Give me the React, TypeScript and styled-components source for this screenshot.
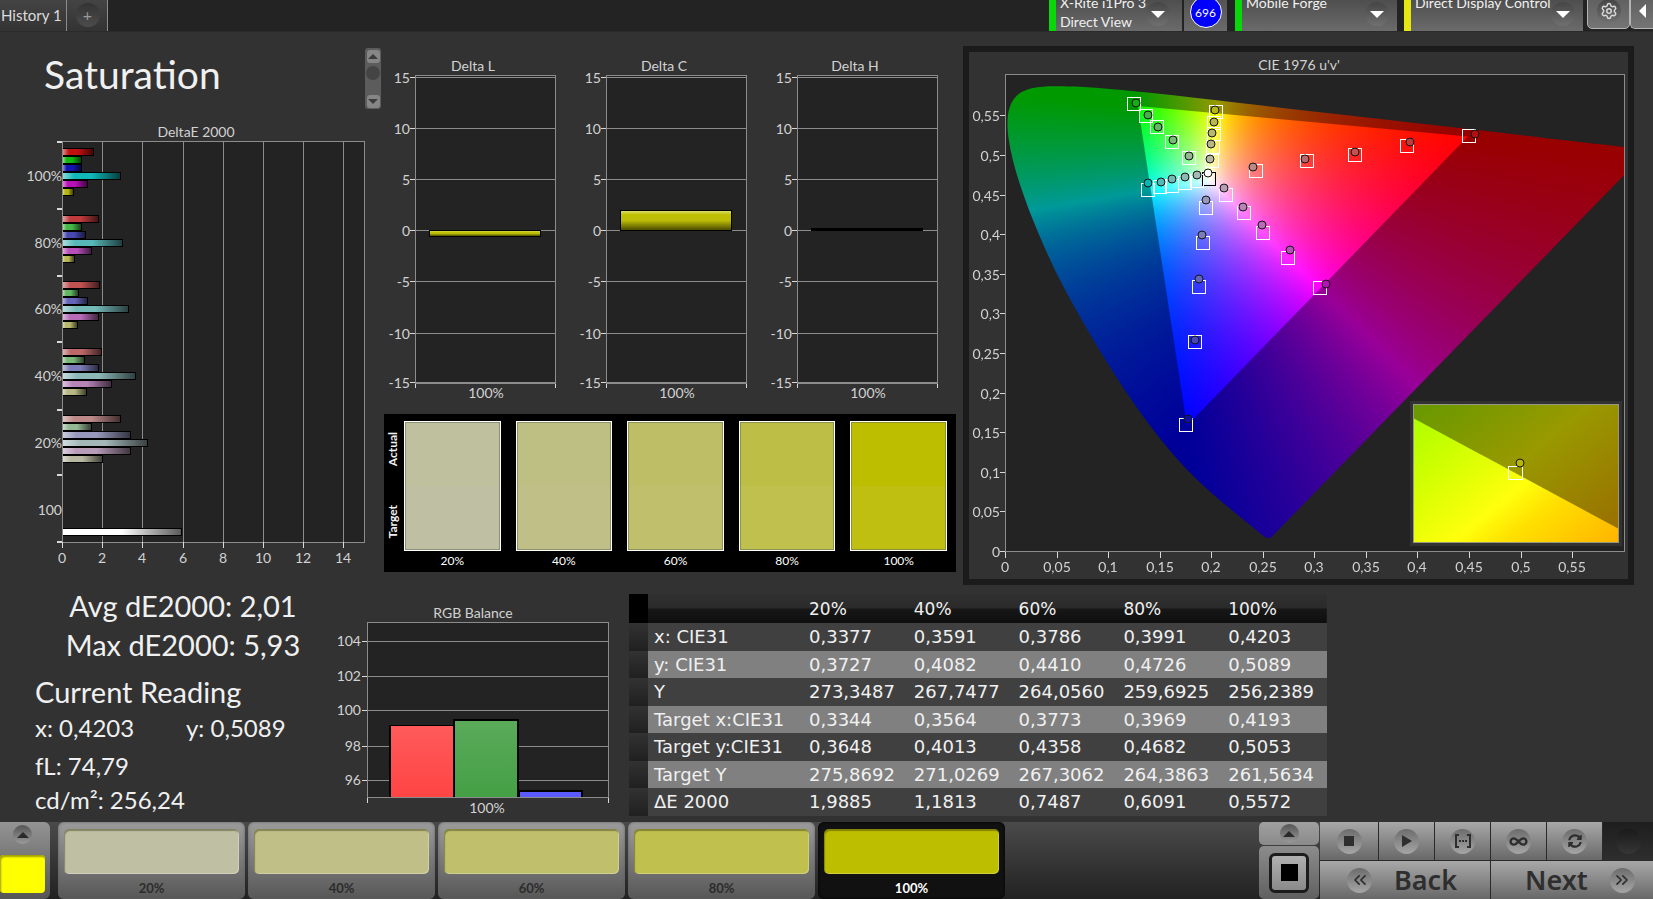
import React, { useEffect, useRef } from "react";
import styled, { createGlobalStyle } from "styled-components";
import { Settings, ChevronsLeft, ChevronsRight, Infinity as InfinityIcon } from "lucide-react";
import { FaSyncAlt } from "react-icons/fa";

const GlobalStyle = createGlobalStyle`
  * { box-sizing: border-box; }
  body { margin: 0; background: #323232; color: #f0f0f0; font-family: Lato, "Liberation Sans", sans-serif; }
  button { font: inherit; color: inherit; border: 0; padding: 0; margin: 0; background: none; cursor: pointer; }
`;

const Page = styled.div`
  display: flex;
  flex-direction: column;
  min-height: 100vh;
  overflow: hidden;
`;

/* ---------- top bar ---------- */

const TopBar = styled.header`
  display: flex;
  align-items: flex-end;
  height: 32px;
  background: #232323;
  border-bottom: 1px solid #2b2b2b;
  overflow: hidden;
`;

const HistoryTab = styled.button<{ $width: number }>`
  display: flex;
  align-items: center;
  justify-content: flex-start;
  width: ${(p) => p.$width}px;
  height: 31px;
  padding: 0 0 2px 1px;
  font-size: 15px;
  color: #dcdcdc;
  background: linear-gradient(#444, #333);
  border-right: 1px solid #8c8c8c;
  white-space: nowrap;
`;

const AddTab = styled(HistoryTab)`
  justify-content: center;
`;

const Spacer = styled.div`
  flex: 1;
`;

const AddMark = styled.span`
  display: grid;
  place-items: center;
  width: 24px;
  height: 24px;
  border-radius: 50%;
  background: linear-gradient(#333, #4c4c4c);
  color: #9a9a9a;
  font-size: 16px;
  line-height: 24px;
`;

const Device = styled.button<{ $accent: string; $width: number; $end?: number }>`
  flex: none;
  display: flex;
  align-items: flex-start;
  justify-content: space-between;
  width: ${(p) => p.$width}px;
  height: 42px;
  padding: 4px ${(p) => p.$end ?? 8}px 0 4px;
  border-left: 7px solid ${(p) => p.$accent};
  background: linear-gradient(#444, #6b6b6b);
  font-size: 14px;
  line-height: 19px;
  text-align: left;
  white-space: nowrap;
`;

const RoundMark = styled.span`
  display: grid;
  place-items: center;
  width: 24px;
  height: 24px;
  border-radius: 50%;
  background: linear-gradient(#454545, #707070);
  ${Device} > & { margin-top: 9px; }
`;

const Gap = styled.div<{ $width: number }>`
  flex: none;
  width: ${(p) => p.$width}px;
`;

const Counter = styled.div`
  flex: none;
  display: flex;
  align-items: flex-start;
  justify-content: center;
  width: 43px;
  height: 35px;
  margin: 0 8px 0 2px;
  background: linear-gradient(#505050, #6b6b6b);
`;

const CounterValue = styled.span`
  display: grid;
  place-items: center;
  width: 32px;
  height: 32px;
  border: 1px solid #fff;
  border-radius: 50%;
  background: #0000fb;
  font-size: 12px;
  color: #fff;
`;

const ToolButton = styled.button<{ $width: number }>`
  flex: none;
  display: grid;
  place-items: center;
  width: ${(p) => p.$width}px;
  height: 40px;
  margin-bottom: 2px;
  padding-top: 4px;
  border: 1px solid #b4b4b4;
  border-radius: 5px;
  background: linear-gradient(#5a5a5a, #757575);
  color: #d8d8d8;
`;

const EdgeButton = styled(ToolButton)`
  border-right: 0;
  border-radius: 5px 0 0 5px;
`;

/* ---------- measurement area ---------- */

const Charts = styled.main`
  display: grid;
  grid-template-columns: 383fr 575fr 695fr;
  min-height: 558px;
`;

const Column = styled.section`
  min-width: 0;
`;

const TitleRow = styled.div`
  display: flex;
  justify-content: space-between;
  align-items: flex-start;
  padding: 16px 2px 0 44px;
`;

const Title = styled.h1`
  margin: 0;
  font-size: 39px;
  line-height: 52px;
  font-weight: 400;
`;

const Scroller = styled.div`
  display: flex;
  flex-direction: column;
  align-items: center;
  justify-content: space-between;
  width: 16px;
  height: 61px;
  padding: 2px 1px 1px;
  border-radius: 3px;
  background: #5c5c5c;
`;

const ScrollButton = styled.button`
  display: grid;
  place-items: center;
  width: 13px;
  height: 13px;
  border-radius: 3px;
  background: #868686;
`;

const ScrollThumb = styled.span`
  width: 14px;
  height: 14px;
  margin-bottom: 12px;
  border-radius: 50%;
  background: #444;
`;

const Drawing = styled.svg`
  display: block;
  width: 100%;
  height: auto;
  font-family: Lato, "Liberation Sans", sans-serif;
  font-size: 14px;
  fill: #d2d2d2;
`;

const DeltaRow = styled.div`
  display: grid;
  grid-template-columns: repeat(3, 1fr);
  padding: 20px 1px 0;
`;

const SwatchPanel = styled.div`
  display: flex;
  margin: 0 2px 0 1px;
  padding: 7px 9px 0 0;
  height: 158px;
  background: #000;
`;

const SideLabels = styled.div`
  flex: none;
  display: flex;
  flex-direction: column;
  justify-content: space-between;
  align-items: center;
  width: 20px;
  height: 128px;
  padding: 11px 3px 11px 0;
  & > span {
    writing-mode: vertical-rl;
    transform: rotate(180deg);
    font-size: 12px;
    line-height: 12px;
    font-weight: 700;
  }
`;

const SwatchGrid = styled.div`
  flex: 1;
  display: grid;
  grid-template-columns: repeat(5, 1fr);
  column-gap: 15px;
`;

const Swatch = styled.figure<{ $actual: string; $target: string }>`
  margin: 0;
  font-size: 12px;
  line-height: 19px;
  text-align: center;
  color: #fff;
  &::before {
    content: "";
    display: block;
    height: 128px;
    border: 1px solid #fff;
    background: linear-gradient(${(p) => p.$actual} 50%, ${(p) => p.$target} 50%);
    box-shadow: inset 0 0 0 1px rgba(90, 100, 80, 0.5);
  }
`;

const CiePanel = styled.div`
  margin: 14px 19px 0 5px;
  border: 6px solid #1b1b1b;
`;

const Results = styled.section`
  display: grid;
  grid-template-columns: minmax(0, 330fr) minmax(0, 299fr) minmax(0, 698fr) minmax(0, 326fr);
  align-items: start;
  min-height: 232px;
`;

const Readings = styled.div`
  padding: 0 0 0 35px;
  white-space: nowrap;
`;

const Summary = styled.p`
  margin: 0;
  width: 296px;
  font-size: 29px;
  line-height: 39px;
  text-align: center;
  &:first-child { margin-top: -4px; }
`;

const ReadingTitle = styled.h2`
  margin: 0;
  padding-top: 9px;
  font-size: 29px;
  line-height: 38px;
  font-weight: 400;
`;

const ReadingLine = styled.p<{ $height: number }>`
  display: grid;
  grid-template-columns: 151px 1fr;
  margin: 0;
  font-size: 24px;
  line-height: ${(p) => p.$height}px;
`;

const DataTable = styled.table`
  width: 100%;
  margin-top: 4px;
  border-collapse: collapse;
  table-layout: fixed;
  font-family: "DejaVu Sans", "Noto Sans", sans-serif;
  font-size: 18px;
  line-height: 20px;
  text-align: left;
  white-space: nowrap;
  th, td { padding: 0 0 0 6px; font-weight: 400; overflow: visible; }
  thead tr { height: 29px; background: linear-gradient(#303030, #2a2a2a 48%, #171717 52%, #0e0e0e); }
  thead th { font-size: 17px; }
  thead th:first-child { background: #000; }
  tbody tr { height: 28px; background: #404040; }
  tbody tr:nth-child(even) { height: 27px; background: #808080; }
  tbody td:first-child { background: linear-gradient(#323232, #202020); }
`;

const Strip = styled.col`
  width: 19px;
`;
const NameCol = styled.col`
  width: 155px;
`;

/* ---------- bottom bar ---------- */

const BottomBar = styled.footer`
  display: flex;
  align-items: stretch;
  height: 77px;
  background: linear-gradient(#4a4a4a, #222);
  overflow: hidden;
`;

const CurrentPatch = styled.div`
  flex: none;
  display: flex;
  flex-direction: column;
  justify-content: space-between;
  width: 50px;
  margin-right: 8px;
  padding: 3px 5px 6px 0;
  border-radius: 0 6px 6px 0;
  background: linear-gradient(#949494, #555);
`;

const ArrowButton = styled.button`
  display: grid;
  place-items: center;
  width: 19px;
  height: 19px;
  margin: 0 0 0 13px;
  border-radius: 50%;
  background: linear-gradient(#555, #9a9a9a);
`;

const PatchColour = styled.span`
  height: 38px;
  border-radius: 4px;
  background: #ffff00;
  box-shadow: inset 1px 2px 2px #a0a000;
`;

const LevelButton = styled.button<{ $on?: boolean }>`
  flex: 0 1 187px;
  height: 77px;
  margin-right: 3px;
  padding: 7px 6px 0;
  border-radius: 6px;
  background: ${(p) => (p.$on ? "#111" : "linear-gradient(#9c9c9c, #575757)")};
  box-shadow: inset 0 0 3px ${(p) => (p.$on ? "#000" : "#606060")};
  font-size: 13px;
  line-height: 28px;
  font-weight: 700;
  color: ${(p) => (p.$on ? "#fff" : "#2c2c2c")};
`;

const LevelColour = styled.span<{ $colour: string }>`
  display: block;
  height: 45px;
  border-radius: 5px;
  background: ${(p) => p.$colour};
  box-shadow: inset 1px 2px 1px rgba(60, 60, 20, 0.45), inset -1px -1px 0 rgba(255, 255, 255, 0.25);
`;

const PatternStack = styled.div`
  flex: none;
  display: grid;
  grid-template-rows: 23px 1fr;
  row-gap: 1px;
  width: 61px;
  padding-right: 1px;
  & > div { display: grid; place-items: center; border-radius: 5px; background: linear-gradient(#8c8c8c, #606060); }
  & > div:first-child { background: linear-gradient(#a0a0a0, #8a8a8a); padding-right: 13px; }
`;

const PatternButton = styled.button`
  display: grid;
  place-items: center;
  width: 40px;
  height: 40px;
  border: 3px solid #1c1c1c;
  border-radius: 6px;
  background: linear-gradient(#b0b0b0, #8a8a8a);
  & > span { width: 17px; height: 17px; background: #000; }
`;

const Transport = styled.div`
  flex: none;
  display: grid;
  grid-template-columns: 58px 55px 55px 55px 55px 50px;
  grid-template-rows: 38px 38px;
  gap: 1px;
  background: #2a2a2a;
`;

const TransportButton = styled.button<{ $off?: boolean }>`
  display: grid;
  place-items: center;
  background: ${(p) => (p.$off ? "linear-gradient(#1e1e1e, #2e2e2e)" : "linear-gradient(#a8a8a8, #686868)")};
  color: #2e2e2e;
`;

const Knob = styled.span<{ $off?: boolean }>`
  display: grid;
  place-items: center;
  width: 25px;
  height: 25px;
  border-radius: 50%;
  background: ${(p) => (p.$off ? "linear-gradient(#1a1a1a, #363636)" : "linear-gradient(#6c6c6c, #a6a6a6)")};
`;

const StepButton = styled.button<{ $inset: number }>`
  grid-column: span 3;
  display: flex;
  align-items: center;
  gap: 22px;
  padding-left: ${(p) => p.$inset}px;
  background: linear-gradient(#a8a8a8, #686868);
  color: #2e2e2e;
  font-family: "Noto Sans", sans-serif;
  font-size: 27px;
  line-height: 36px;
  font-weight: 600;
`;

const FRAME = "#8c8c8c";
const TICK = "#d8d8d8";

function Triangle({ dir, size, fill }: { dir: "up" | "down" | "left"; size: number; fill: string }) {
  const d = dir === "up" ? "M0 8 L8 0 L16 8Z" : dir === "down" ? "M0 0 L16 0 L8 8Z" : "M8 0 L8 16 L0 8Z";
  const side = dir === "left";
  return (
    <svg width={side ? size / 2 : size} height={side ? size : size / 2} viewBox={side ? "0 0 8 16" : "0 0 16 8"} aria-hidden="true">
      <path d={d} fill={fill} />
    </svg>
  );
}

/* ---------- Delta E 2000 bars ---------- */

const BAR_GROUPS = [
  { label: "100%", y: 38, bars: [[32, "#c01010"], [20, "#12b812"], [20, "#1414b4"], [59, "#10b8b8"], [26, "#b810b8"], [12, "#b8b814"]] },
  { label: "80%", y: 105, bars: [[37, "#c03c3c"], [20, "#46b846"], [24, "#4848b0"], [61, "#58b8b8"], [30, "#b850b8"], [13, "#b8b850"]] },
  { label: "60%", y: 171, bars: [[38, "#c05252"], [17, "#62b862"], [26, "#6464b8"], [67, "#74b8b8"], [37, "#b86cb8"], [16, "#b8b86c"]] },
  { label: "40%", y: 238, bars: [[40, "#bc6868"], [23, "#7ab87a"], [37, "#7c7cb8"], [74, "#8cb8b8"], [50, "#b884b8"], [25, "#b8b884"]] },
  { label: "20%", y: 305, bars: [[59, "#bc8888"], [30, "#94b894"], [69, "#9898bc"], [86, "#a4b8b8"], [69, "#b89cb8"], [41, "#b8b8a0"]] },
] as { label: string; y: number; bars: [number, string][] }[];

function DeltaEChart() {
  const left = 62, right = 364, top = 32, bottom = 433;
  const xs = [0, 2, 4, 6, 8, 10, 12, 14];
  const px = (v: number) => left + Math.round(v * 20.1);
  return (
    <Drawing viewBox="0 0 383 460" role="img" aria-label="DeltaE 2000">
      <defs>
        <linearGradient id="sheen-x">
          <stop offset="0" stopColor="#fff" stopOpacity=".5" />
          <stop offset=".2" stopColor="#fff" stopOpacity="0" />
          <stop offset=".5" stopColor="#000" stopOpacity="0" />
          <stop offset="1" stopColor="#000" stopOpacity=".65" />
        </linearGradient>
      </defs>
      <text x="196" y="28" textAnchor="middle">DeltaE 2000</text>
      <g shapeRendering="crispEdges">
        <rect x={left} y={top} width={right - left} height={bottom - top} fill="#232323" />
        {xs.slice(1).map((v) => <rect key={v} x={px(v)} y={top} width="1" height={bottom - top} fill={FRAME} />)}
        <rect x={left + 0.5} y={top + 0.5} width={right - left} height={bottom - top} fill="none" stroke={FRAME} />
        {xs.map((v) => <rect key={v} x={px(v)} y={bottom} width="1" height="6" fill={TICK} />)}
        {[32, 99, 166, 232, 300, 365, 432].map((y) => <rect key={y} x="57" y={y} width="5" height="2" fill={TICK} />)}
      </g>
      {BAR_GROUPS.map((g) => (
        <g key={g.label}>
          {g.bars.map(([w, c], i) => (
            <g key={i}>
              <rect x={left + 1} y={g.y + i * 8 + 1} width={w - 1} height="8" fill="#000" />
              <rect x={left + 1} y={g.y + i * 8 + 2} width={w - 2} height="6" fill={c} />
              <rect x={left + 1} y={g.y + i * 8 + 2} width={w - 2} height="6" fill="url(#sheen-x)" />
            </g>
          ))}
          <text x={left} y={g.y + 34} textAnchor="end">{g.label}</text>
        </g>
      ))}
      <rect x={left + 1} y="419" width="119" height="8" fill="#000" />
      <rect x={left + 1} y="420" width="118" height="6" fill="#fff" />
      <rect x={left + 1} y="420" width="118" height="6" fill="url(#sheen-x)" />
      <text x={left} y="406" textAnchor="end">100</text>
      {xs.map((v) => <text key={v} x={px(v)} y="454" textAnchor="middle">{v}</text>)}
    </Drawing>
  );
}

/* ---------- Delta L / C / H ---------- */

function DeltaChart({ name, from, to }: { name: string; from: number; to: number }) {
  const id = "sheen-" + name;
  const grid: [number, number][] = [[15, 25], [10, 76], [5, 127], [0, 178], [-5, 229], [-10, 281], [-15, 330]];
  return (
    <Drawing viewBox="0 0 191 362" role="img" aria-label={"Delta " + name}>
      <defs>
        <linearGradient id={id} x1="0" y1="0" x2="0" y2="1">
          <stop offset="0" stopColor="#dcdc70" />
          <stop offset=".2" stopColor="#c0c000" />
          <stop offset=".5" stopColor="#bcbc08" />
          <stop offset="1" stopColor="#4c4c00" />
        </linearGradient>
      </defs>
      <text x="89" y="19" textAnchor="middle">{"Delta " + name}</text>
      <g shapeRendering="crispEdges">
        <rect x="31" y="23" width="140" height="308" fill="#232323" />
        {grid.map(([v, y]) => (
          <g key={v}>
            <rect x="31" y={y} width="140" height="1" fill={FRAME} />
            <rect x="26" y={y} width="5" height="1" fill={TICK} />
          </g>
        ))}
        <rect x="31.5" y="23.5" width="140" height="308" fill="none" stroke={FRAME} />
        <rect x="31" y="332" width="1" height="4" fill={TICK} />
        <rect x="171" y="332" width="1" height="4" fill={TICK} />
        <rect x="45" y={from} width="112" height={to - from} fill="#000" />
        {to - from > 4 && <rect x="46" y={from + 1} width="110" height={to - from - 2} fill={`url(#${id})`} />}
      </g>
      {grid.map(([v, y]) => <text key={v} x="26" y={y + 6} textAnchor="end">{v}</text>)}
      <text x="102" y="346" textAnchor="middle">100%</text>
    </Drawing>
  );
}

/* ---------- RGB balance ---------- */

function RgbBalance() {
  const grid: [number, number][] = [[104, 51], [102, 86], [100, 120], [98, 156], [96, 190]];
  return (
    <Drawing viewBox="0 0 299 230" role="img" aria-label="RGB Balance">
      <defs>
        <linearGradient id="rb" x1="0" y1="0" x2="0" y2="1"><stop stopColor="#ff5a5a" /><stop offset="1" stopColor="#ff4444" /></linearGradient>
        <linearGradient id="gb" x1="0" y1="0" x2="0" y2="1"><stop stopColor="#5aaa5a" /><stop offset="1" stopColor="#44a044" /></linearGradient>
      </defs>
      <text x="143" y="28" textAnchor="middle">RGB Balance</text>
      <g shapeRendering="crispEdges">
        <rect x="37" y="32" width="241" height="176" fill="#232323" />
        {grid.map(([v, y]) => (
          <g key={v}>
            <rect x="37" y={y} width="241" height="1" fill={FRAME} />
            <rect x="32" y={y} width="5" height="1" fill={TICK} />
          </g>
        ))}
        <rect x="59" y="135" width="65" height="73" fill="#000" />
        <rect x="61" y="136" width="62" height="72" fill="url(#rb)" />
        <rect x="123" y="129" width="66" height="79" fill="#000" />
        <rect x="125" y="131" width="62" height="77" fill="url(#gb)" />
        <rect x="188" y="200" width="65" height="8" fill="#000" />
        <rect x="190" y="202" width="61" height="6" fill="#5a5aff" />
        <rect x="37.5" y="32.5" width="241" height="175" fill="none" stroke={FRAME} />
        <rect x="37" y="208" width="1" height="5" fill={TICK} />
        <rect x="278" y="208" width="1" height="5" fill={TICK} />
      </g>
      {grid.map(([v, y]) => <text key={v} x="31" y={y + 5} textAnchor="end">{v}</text>)}
      <text x="157" y="223" textAnchor="middle">100%</text>
    </Drawing>
  );
}

/* ---------- CIE 1976 diagram ---------- */

const LOCUS_XY: [number, number][] = [
  [0.1741, 0.005], [0.1714, 0.0051], [0.1689, 0.0069], [0.1644, 0.0109], [0.1566, 0.0177], [0.151, 0.0227],
  [0.144, 0.0297], [0.1355, 0.0399], [0.1241, 0.0578], [0.1096, 0.0868], [0.0913, 0.1327], [0.0687, 0.2007],
  [0.0454, 0.295], [0.0235, 0.4127], [0.0082, 0.5384], [0.0039, 0.6548], [0.0139, 0.7502], [0.0389, 0.812],
  [0.0743, 0.8338], [0.1142, 0.8262], [0.1547, 0.8059], [0.2296, 0.7543], [0.3016, 0.6923], [0.3731, 0.6245],
  [0.4441, 0.5547], [0.5125, 0.4866], [0.5752, 0.4242], [0.627, 0.3725], [0.6658, 0.334], [0.6915, 0.3083],
  [0.719, 0.2809], [0.7347, 0.2653],
];
const GAMUT: [number, number][] = [[0.448, 0.5235], [0.128, 0.562], [0.1754, 0.158]];
const PLOT_W = 618;
const PLOT_H = 476;
const U_SCALE = 1031;
const V_SCALE = 792;

/* fully saturated display colour for a u'v' chromaticity */
function colourAt(u: number, v: number): [number, number, number] {
  const d = 6 * u - 16 * v + 12;
  const x = (9 * u) / d;
  const y = (4 * v) / d;
  const z = 1 - x - y;
  const lin = [
    3.2406 * x - 1.5372 * y - 0.4986 * z,
    -0.9689 * x + 1.8758 * y + 0.0415 * z,
    0.0557 * x - 0.204 * y + 1.057 * z,
  ].map((c) => Math.max(0, c));
  const m = Math.max(...lin, 1e-6);
  return lin.map((c) => (255 * c) / m) as [number, number, number];
}

function layer(strength: number) {
  const c = document.createElement("canvas");
  c.width = PLOT_W;
  c.height = PLOT_H;
  const ctx = c.getContext("2d")!;
  const img = ctx.createImageData(PLOT_W, PLOT_H);
  for (let j = 0; j < PLOT_H; j++) {
    for (let i = 0; i < PLOT_W; i++) {
      const rgb = colourAt(i / U_SCALE, (PLOT_H - j) / V_SCALE);
      const k = (j * PLOT_W + i) * 4;
      for (let n = 0; n < 3; n++) img.data[k + n] = rgb[n] * strength;
      img.data[k + 3] = 255;
    }
  }
  ctx.putImageData(img, 0, 0);
  return c;
}

function Chromaticity() {
  const ref = useRef<HTMLCanvasElement>(null);
  useEffect(() => {
    const ctx = ref.current!.getContext("2d")!;
    const toPx = ([u, v]: [number, number]): [number, number] => [u * U_SCALE, PLOT_H - v * V_SCALE];
    const locus = LOCUS_XY.map(([x, y]) => {
      const d = -2 * x + 12 * y + 3;
      return toPx([(4 * x) / d, (9 * y) / d]);
    });
    ctx.clearRect(0, 0, PLOT_W, PLOT_H);
    ctx.save();
    ctx.beginPath();
    ctx.moveTo(...locus[0]);
    for (let i = 0; i < locus.length - 1; i++) {
      const a = locus[Math.max(0, i - 1)], b = locus[i], c = locus[i + 1], e = locus[Math.min(locus.length - 1, i + 2)];
      ctx.bezierCurveTo(b[0] + (c[0] - a[0]) / 6, b[1] + (c[1] - a[1]) / 6, c[0] - (e[0] - b[0]) / 6, c[1] - (e[1] - b[1]) / 6, c[0], c[1]);
    }
    ctx.closePath();
    ctx.clip();
    ctx.drawImage(layer(0.6), 0, 0);
    ctx.restore();
    ctx.save();
    ctx.beginPath();
    GAMUT.map(toPx).forEach(([x, y], i) => (i ? ctx.lineTo(x, y) : ctx.moveTo(x, y)));
    ctx.closePath();
    ctx.clip();
    ctx.drawImage(layer(1), 0, 0);
    ctx.restore();
  }, []);
  return <canvas ref={ref} width={PLOT_W} height={PLOT_H} />;
}

/* target x, target y, reading x, reading y, reading colour */
const MARKS: [number, number, number, number, string][] = [
  [228, 129, 228, 123, "#a4b8b8"], [216, 131, 216, 125, "#8cb8b8"], [203, 134, 203, 127, "#74b8b8"], [191, 135, 192, 130, "#54b8b8"], [179, 138, 179, 131, "#00b8b8"],
  [220, 106, 220, 104, "#94b894"], [203, 90, 204, 88, "#7ab87a"], [188, 75, 189, 75, "#62b862"], [177, 64, 179, 63, "#46b046"], [165, 52, 167, 51, "#12b012"],
  [243, 109, 241, 107, "#b8b8a0"], [244, 95, 242, 92, "#b8b884"], [245, 82, 243, 81, "#b8b86c"], [245, 71, 245, 70, "#b8b850"], [247, 60, 246, 58, "#b8b814"],
  [287, 119, 284, 115, "#bc8888"], [338, 109, 336, 107, "#bc6868"], [386, 103, 386, 100, "#c05252"], [438, 94, 441, 90, "#c03c3c"], [500, 84, 506, 82, "#b01010"],
  [257, 143, 255, 136, "#b89cb8"], [275, 161, 274, 155, "#b884b8"], [294, 181, 293, 173, "#b86cb8"], [319, 206, 321, 198, "#b850b8"], [351, 236, 357, 232, "#b810b8"],
  [237, 156, 237, 148, "#9898bc"], [234, 191, 233, 183, "#7c7cb8"], [230, 235, 230, 227, "#6464b8"], [226, 290, 226, 288, "#4848b0"], [217, 373, 219, 367, "#1010a0"],
];

function CieChart() {
  const left = 36, top = 22, right = 655, bottom = 499;
  const fmt = (n: number) => String(n).replace(".", ",");
  const us = Array.from({ length: 12 }, (_, i) => Math.round(i * 5) / 100);
  return (
    <Drawing viewBox="0 0 659 527" role="img" aria-label="CIE 1976 u'v'">
      <defs>
        <linearGradient id="in-b" gradientUnits="userSpaceOnUse" x1="444" y1="352" x2="592" y2="536">
          <stop offset="0" stopColor="#a8ff00" />
          <stop offset=".25" stopColor="#ccff00" />
          <stop offset=".56" stopColor="#ffff0c" />
          <stop offset=".7" stopColor="#ffe000" />
          <stop offset="1" stopColor="#ffb400" />
        </linearGradient>
        <linearGradient id="in-d" gradientUnits="userSpaceOnUse" x1="444" y1="352" x2="592" y2="536">
          <stop offset="0" stopColor="#669900" />
          <stop offset=".47" stopColor="#999900" />
          <stop offset="1" stopColor="#996c00" />
        </linearGradient>
      </defs>
      <text x="330" y="18" textAnchor="middle">CIE 1976 u'v'</text>
      <rect x={left} y={top} width={right - left} height={bottom - top} fill="#232323" />
      <foreignObject x={left + 1} y={top + 1} width={PLOT_W} height={PLOT_H}>
        <Chromaticity />
      </foreignObject>
      <g shapeRendering="crispEdges">
        <rect x={left + 0.5} y={top + 0.5} width={right - left} height={bottom - top} fill="none" stroke={FRAME} />
        {us.map((n, i) => (
          <g key={n} fill={TICK}>
            <rect x={left + Math.round(i * 51.55)} y={bottom + 1} width="1" height="6" />
            <rect x={left - 5} y={bottom - Math.round(i * 39.6)} width="5" height="1" />
          </g>
        ))}
      </g>
      {us.map((n, i) => (
        <g key={n}>
          <text x={left + Math.round(i * 51.55)} y="520" textAnchor="middle">{fmt(n)}</text>
          <text x={left - 5} y={bottom + 6 - Math.round(i * 39.6)} textAnchor="end">{fmt(n)}</text>
        </g>
      ))}
      <rect x="233.5" y="120.5" width="13" height="13" fill="none" stroke="#000" />
      {MARKS.map(([tx, ty], i) => (
        <rect key={i} x={tx - 6.5} y={ty - 6.5} width="13" height="13" fill="none" stroke="#fff" />
      ))}
      {MARKS.map(([, , cx, cy, c], i) => <circle key={i} cx={cx} cy={cy} r="4" fill={c} stroke="#141414" />)}
      <circle cx="239" cy="121" r="4" fill="#fff" stroke="#141414" />
      <rect x="441" y="349" width="212" height="145" fill="#323232" />
      <rect x="444" y="352" width="206" height="139" fill="url(#in-d)" />
      <path d="M444 366 L650 477 V491 H444Z" fill="url(#in-b)" />
      <rect x="444.5" y="352.5" width="205" height="138" fill="none" stroke="#989880" />
      <rect x="539.5" y="414.5" width="14" height="13" fill="none" stroke="#fff" />
      <circle cx="551" cy="411" r="4" fill="#b8b800" stroke="#141414" />
    </Drawing>
  );
}

const SWATCHES: [string, string, string][] = [
  ["20%", "#bfc09e", "#bfbfa4"],
  ["40%", "#bebf82", "#c0bf88"],
  ["60%", "#bebe66", "#bfbf6c"],
  ["80%", "#bdbe46", "#bfc04e"],
  ["100%", "#bebe00", "#bfbf12"],
];

const ROWS: string[][] = [
  ["x: CIE31", "0,3377", "0,3591", "0,3786", "0,3991", "0,4203"],
  ["y: CIE31", "0,3727", "0,4082", "0,4410", "0,4726", "0,5089"],
  ["Y", "273,3487", "267,7477", "264,0560", "259,6925", "256,2389"],
  ["Target x:CIE31", "0,3344", "0,3564", "0,3773", "0,3969", "0,4193"],
  ["Target y:CIE31", "0,3648", "0,4013", "0,4358", "0,4682", "0,5053"],
  ["Target Y", "275,8692", "271,0269", "267,3062", "264,3863", "261,5634"],
  ["ΔE 2000", "1,9885", "1,1813", "0,7487", "0,6091", "0,5572"],
];

export default function App() {
  return (
    <Page>
      <GlobalStyle />
      <TopBar>
        <HistoryTab $width={67}>History 1</HistoryTab>
        <AddTab $width={41} aria-label="Add history"><AddMark>+</AddMark></AddTab>
        <Spacer />
        <Device $accent="#08d808" $width={133} $end={12}>
          <span>X-Rite i1Pro 3<br />Direct View</span>
          <RoundMark><Triangle dir="down" size={14} fill="#fff" /></RoundMark>
        </Device>
        <Counter><CounterValue>696</CounterValue></Counter>
        <Device $accent="#08d808" $width={162}>
          <span>Mobile Forge</span>
          <RoundMark><Triangle dir="down" size={14} fill="#fff" /></RoundMark>
        </Device>
        <Gap $width={7} />
        <Device $accent="#e6e610" $width={179}>
          <span>Direct Display Control</span>
          <RoundMark><Triangle dir="down" size={14} fill="#fff" /></RoundMark>
        </Device>
        <Gap $width={4} />
        <ToolButton $width={43} aria-label="Settings"><RoundMark><Settings size={18} strokeWidth={2} /></RoundMark></ToolButton>
        <EdgeButton $width={23} aria-label="Collapse"><Triangle dir="left" size={14} fill="#fff" /></EdgeButton>
      </TopBar>

      <Charts>
        <Column>
          <TitleRow>
            <Title>Saturation</Title>
            <Scroller>
              <ScrollButton aria-label="Scroll up"><Triangle dir="up" size={10} fill="#3c3c3c" /></ScrollButton>
              <ScrollThumb />
              <ScrollButton aria-label="Scroll down"><Triangle dir="down" size={10} fill="#3c3c3c" /></ScrollButton>
            </Scroller>
          </TitleRow>
          <DeltaEChart />
        </Column>
        <Column>
          <DeltaRow>
            <DeltaChart name="L" from={178} to={185} />
            <DeltaChart name="C" from={158} to={179} />
            <DeltaChart name="H" from={176} to={179} />
          </DeltaRow>
          <SwatchPanel>
            <SideLabels><span>Actual</span><span>Target</span></SideLabels>
            <SwatchGrid>
              {SWATCHES.map(([l, a, t]) => (
                <Swatch key={l} $actual={a} $target={t}><figcaption>{l}</figcaption></Swatch>
              ))}
            </SwatchGrid>
          </SwatchPanel>
        </Column>
        <Column>
          <CiePanel><CieChart /></CiePanel>
        </Column>
      </Charts>

      <Results>
        <Readings>
          <Summary>Avg dE2000: 2,01</Summary>
          <Summary>Max dE2000: 5,93</Summary>
          <ReadingTitle>Current Reading</ReadingTitle>
          <ReadingLine $height={34}><span>x: 0,4203</span><span>y: 0,5089</span></ReadingLine>
          <ReadingLine $height={42}><span>fL: 74,79</span></ReadingLine>
          <ReadingLine $height={26}><span>cd/m²: 256,24</span></ReadingLine>
        </Readings>
        <RgbBalance />
        <DataTable>
          <colgroup><Strip /><NameCol /><col /><col /><col /><col /><col /></colgroup>
          <thead>
            <tr>
              <th /><th />
              {SWATCHES.map(([l]) => <th key={l} scope="col">{l}</th>)}
            </tr>
          </thead>
          <tbody>
            {ROWS.map(([name, ...values]) => (
              <tr key={name}>
                <td />
                <th scope="row">{name}</th>
                {values.map((v, i) => <td key={i}>{v}</td>)}
              </tr>
            ))}
          </tbody>
        </DataTable>
      </Results>

      <BottomBar>
        <CurrentPatch>
          <ArrowButton aria-label="Show patches"><Triangle dir="up" size={12} fill="#2a2a2a" /></ArrowButton>
          <PatchColour />
        </CurrentPatch>
        {SWATCHES.map(([l, , t], i) => (
          <LevelButton key={l} $on={i === 4}>
            <LevelColour $colour={i === 4 ? "#bebe00" : t} />
            {l}
          </LevelButton>
        ))}
        <Spacer />
        <PatternStack>
          <div><ArrowButton aria-label="Show patterns"><Triangle dir="up" size={12} fill="#2a2a2a" /></ArrowButton></div>
          <div><PatternButton aria-label="Window pattern"><span /></PatternButton></div>
        </PatternStack>
        <Transport>
          <TransportButton aria-label="Stop">
            <Knob><svg width="10" height="10" aria-hidden="true"><rect width="10" height="10" fill="currentColor" /></svg></Knob>
          </TransportButton>
          <TransportButton aria-label="Play">
            <Knob><svg width="11" height="12" aria-hidden="true"><path d="M1 0 L11 6 L1 12Z" fill="currentColor" /></svg></Knob>
          </TransportButton>
          <TransportButton aria-label="Range">
            <Knob>
              <svg width="16" height="14" viewBox="0 0 16 14" aria-hidden="true">
                <path d="M4 1H1V13H4M12 1H15V13H12" fill="none" stroke="currentColor" strokeWidth="2" />
                <path d="M4 7H6M7 7H9M10 7H12" stroke="currentColor" strokeWidth="2" />
              </svg>
            </Knob>
          </TransportButton>
          <TransportButton aria-label="Continuous"><Knob><InfinityIcon size={19} strokeWidth={3} /></Knob></TransportButton>
          <TransportButton aria-label="Repeat"><Knob><FaSyncAlt size={14} /></Knob></TransportButton>
          <TransportButton $off aria-label="Off"><Knob $off /></TransportButton>
          <StepButton $inset={27}><Knob><ChevronsLeft size={20} /></Knob>Back</StepButton>
          <StepButton $inset={34}>Next<Knob><ChevronsRight size={20} /></Knob></StepButton>
        </Transport>
      </BottomBar>
    </Page>
  );
}
